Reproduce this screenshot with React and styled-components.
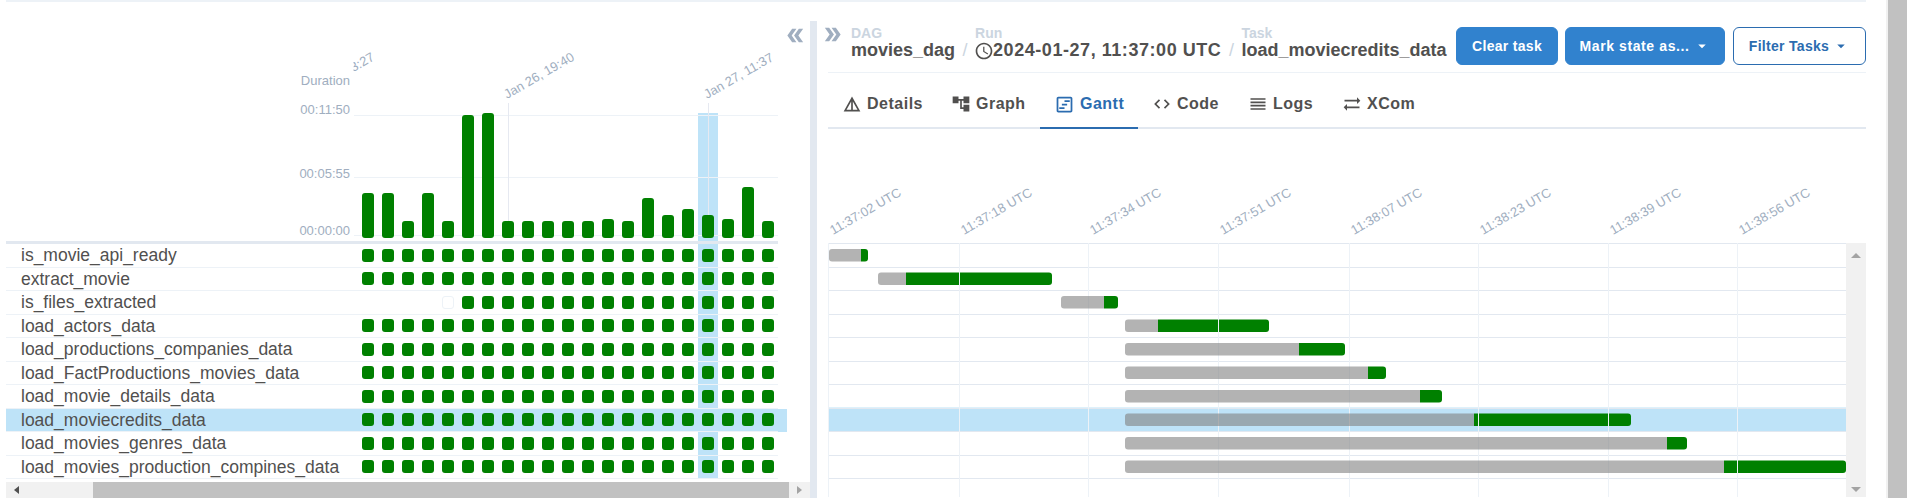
import React from "react";
import styled, { createGlobalStyle } from "styled-components";
import {
  MdDoubleArrow,
  MdAccessTime,
  MdArrowDropDown,
  MdDetails,
  MdAccountTree,
  MdOutlineViewTimeline,
  MdReorder,
  MdSyncAlt,
} from "react-icons/md";
import { BiCode } from "react-icons/bi";

const GREEN = "#008000";
const TEXT = "#51504f";
const AXIS = "#a0aec0";
const LINE = "#edf2f7";
const BORDER = "#e2e8f0";
const SELECTED = "#bee3f8";

const tasks = [
  "is_movie_api_ready",
  "extract_movie",
  "is_files_extracted",
  "load_actors_data",
  "load_productions_companies_data",
  "load_FactProductions_movies_data",
  "load_movie_details_data",
  "load_moviecredits_data",
  "load_movies_genres_data",
  "load_movies_production_compines_data",
];
const SELECTED_TASK = 7;
const SELECTED_RUN = 17;

// top of each duration bar, page y
const barTops = [
  193, 193, 221, 193, 221, 115, 113, 221, 221, 221, 221, 221, 219, 221, 198,
  215, 209, 215, 219, 187, 221,
];

// x where waiting ends, x where running ends
const ganttBars = [
  [829, 861, 868],
  [878, 906, 1052],
  [1061, 1104, 1118],
  [1125, 1158, 1269],
  [1125, 1299, 1345],
  [1125, 1368, 1386],
  [1125, 1420, 1442],
  [1125, 1474, 1631],
  [1125, 1667, 1687],
  [1125, 1724, 1846],
];

const ganttTicks = [
  [828, "11:37:02 UTC"],
  [959, "11:37:18 UTC"],
  [1088, "11:37:34 UTC"],
  [1218, "11:37:51 UTC"],
  [1349, "11:38:07 UTC"],
  [1478, "11:38:23 UTC"],
  [1608, "11:38:39 UTC"],
  [1737, "11:38:56 UTC"],
];

const tabs = [
  ["Details", MdDetails, 20, 109],
  ["Graph", MdAccountTree, 20, 103],
  ["Gantt", MdOutlineViewTimeline, 21, 98],
  ["Code", BiCode, 20, 96],
  ["Logs", MdReorder, 20, 94],
  ["XCom", MdSyncAlt, 20, 103],
];

const GlobalStyle = createGlobalStyle`
  html, body {
    margin: 0;
    height: 498px;
    overflow: hidden;
    background: #fff;
    font-family: "Liberation Sans", Arial, sans-serif;
    color: ${TEXT};
  }
`;

const Page = styled.div`
  display: flex;
  width: 1907px;
  height: 498px;
`;

const Content = styled.div`
  width: 1860px;
  margin-left: 6px;
`;

const TopStrip = styled.div`
  height: 2px;
  background: ${LINE};
`;

const Columns = styled.div`
  display: flex;
  height: 496px;
`;

const PageScrollbar = styled.div`
  width: 19px;
  margin-left: 20px;
  background: #c1c1c1;
  border-left: 2px solid #f1f1f1;
`;

const LeftPanel = styled.section`
  position: relative;
  width: 804px;
  flex: none;
`;

const CollapseButton = styled.span`
  position: absolute;
  top: 22px;
  left: 778px;
  display: flex;
  color: ${AXIS};
  transform: rotate(180deg);
`;

const ChartSvg = styled.svg`
  display: block;
`;

const ChartRule = styled.div`
  width: 772px;
  height: 3px;
  background: ${BORDER};
`;

const Row = styled.div`
  display: flex;
  width: 772px;
  height: 23.5px;
  padding-right: 9px;
  background: ${(p) => (p.$selected ? SELECTED : "transparent")};
`;

const TaskName = styled.div`
  width: 352px;
  flex: none;
  box-sizing: border-box;
  padding-left: 15px;
  font-size: 17.5px;
  line-height: 22.5px;
  white-space: nowrap;
  border-bottom: 1px solid ${LINE};
`;

const RunCell = styled.div`
  width: 20px;
  flex: none;
  box-sizing: border-box;
  display: flex;
  align-items: center;
  justify-content: center;
  background: ${(p) => (p.$selected ? SELECTED : "transparent")};
  border-bottom: 1px solid ${LINE};
`;

const RunSquare = styled.span`
  width: 12px;
  height: 13px;
  box-sizing: border-box;
  border-radius: 3px;
  background: ${(p) => (p.$empty ? "#fff" : GREEN)};
  border: ${(p) => (p.$empty ? `1px solid ${LINE}` : "none")};
`;

const HScrollbar = styled.div`
  display: flex;
  align-items: center;
  height: 16px;
  margin-top: 3px;
  background: #f1f1f1;
`;

const ArrowSlot = styled.div`
  width: ${(p) => p.$width}px;
  flex: none;
  box-sizing: border-box;
  padding-left: 8px;
`;

const ArrowLeft = styled.div`
  width: 0;
  height: 0;
  border-style: solid;
  border-width: 4px 5px 4px 0;
  border-color: transparent #505050 transparent transparent;
`;

const ArrowRight = styled.div`
  width: 0;
  height: 0;
  border-style: solid;
  border-width: 4px 0 4px 5px;
  border-color: transparent transparent transparent #a3a3a3;
`;

const HThumb = styled.div`
  flex: 1;
  height: 16px;
  background: #c1c1c1;
`;

const Divider = styled.div`
  width: 7px;
  flex: none;
  margin-top: 19px;
  background: ${BORDER};
`;

const RightPanel = styled.section`
  width: 1049px;
  flex: none;
  padding-left: 11px;
  box-sizing: border-box;
`;

const Header = styled.header`
  display: flex;
  align-items: flex-end;
  justify-content: space-between;
  height: 71px;
  box-sizing: border-box;
  padding-bottom: 7px;
  border-bottom: 1px solid ${LINE};
`;

const Crumbs = styled.div`
  display: flex;
  align-items: flex-end;
`;

const ExpandButton = styled.span`
  display: flex;
  align-self: flex-start;
  margin: -3px 7px 0 -7px;
  color: ${AXIS};
`;

const Crumb = styled.div`
  display: flex;
  flex-direction: column;
  padding-bottom: 4px;
`;

const CrumbLabel = styled.span`
  font-size: 14px;
  line-height: 14px;
  font-weight: 700;
  color: #cbd5e0;
`;

const CrumbValue = styled.span`
  display: flex;
  align-items: center;
  font-size: 18px;
  line-height: 21px;
  font-weight: 700;
  white-space: nowrap;
  svg {
    margin: 1px -1px 0 -1px;
  }
`;

const RunDate = styled.span`
  letter-spacing: 0.55px;
`;

const Slash = styled.span`
  margin: 0 7.5px;
  padding-bottom: 4px;
  font-size: 18px;
  line-height: 21px;
  color: #cbd5e0;
`;

const Actions = styled.div`
  display: flex;
`;

const ActionButton = styled.button`
  display: flex;
  align-items: center;
  justify-content: center;
  height: 38px;
  width: ${(p) => p.$width}px;
  margin-left: ${(p) => p.$gap}px;
  padding: 0;
  box-sizing: border-box;
  font-family: inherit;
  font-size: 14px;
  font-weight: 700;
  letter-spacing: ${(p) => p.$spacing}px;
  border-radius: 6px;
  color: ${(p) => (p.$outline ? "#2b6cb0" : "#fff")};
  background: ${(p) => (p.$outline ? "#fff" : "#3182ce")};
  border: 1px solid ${(p) => (p.$outline ? "#2b6cb0" : "#3182ce")};
  svg {
    margin-left: 3px;
  }
`;

const TabList = styled.nav`
  display: flex;
  padding-top: 6px;
  border-bottom: 2px solid ${BORDER};
`;

const Tab = styled.div`
  display: flex;
  align-items: center;
  gap: 5px;
  width: ${(p) => p.$width}px;
  height: 50px;
  margin-bottom: -2px;
  box-sizing: border-box;
  padding: 12px 0 10px 14px;
  font-size: 16px;
  line-height: 24px;
  font-weight: 700;
  letter-spacing: 0.5px;
  color: ${(p) => (p.$active ? "#2b6cb0" : TEXT)};
  border-bottom: 2px solid ${(p) => (p.$active ? "#2b6cb0" : "transparent")};
`;

const GanttArea = styled.div`
  display: flex;
`;

const VScrollbar = styled.div`
  display: flex;
  flex-direction: column;
  align-items: center;
  justify-content: space-between;
  width: 20px;
  height: 254px;
  margin-top: 114px;
  padding: 10px 0 5px;
  box-sizing: border-box;
  background: #f1f1f1;
`;

const ArrowUp = styled.div`
  width: 0;
  height: 0;
  border-style: solid;
  border-width: 0 5px 5px 5px;
  border-color: transparent transparent #a3a3a3 transparent;
`;

const ArrowDown = styled.div`
  width: 0;
  height: 0;
  border-style: solid;
  border-width: 5px 5px 0 5px;
  border-color: #a3a3a3 transparent transparent transparent;
`;

const leftRounded = (x0, x1, y, h, r = 3) =>
  `M${x1} ${y}H${x0 + r}Q${x0} ${y} ${x0} ${y + r}V${y + h - r}Q${x0} ${y + h} ${x0 + r} ${y + h}H${x1}Z`;

const rightRounded = (x0, x1, y, h, r = 3) =>
  `M${x0} ${y}H${x1 - r}Q${x1} ${y} ${x1} ${y + r}V${y + h - r}Q${x1} ${y + h} ${x1 - r} ${y + h}H${x0}Z`;

const DurationChart = () => (
  <ChartSvg width="772" height="239" viewBox="6 2 772 239">
    <defs>
      <clipPath id="plot-clip">
        <rect x="353.5" y="2" width="425" height="239" />
      </clipPath>
    </defs>
    <rect x="698" y="113" width="20" height="128" fill={SELECTED} />
    {[115.5, 177.5, 235.5].map((y) => (
      <line key={y} x1="354" x2="778" y1={y} y2={y} stroke={LINE} />
    ))}
    {[508.5, 708.5].map((x) => (
      <line key={x} x1={x} x2={x} y1="103" y2="238" stroke="#e6e9f1" />
    ))}
    {barTops.map((top, i) => (
      <rect
        key={i}
        x={362 + i * 20}
        y={top}
        width="12"
        height={238 - top}
        rx="3"
        fill={GREEN}
      />
    ))}
    <g fill={AXIS} fontSize="13" textAnchor="end">
      <text x="350" y="85">Duration</text>
      <text x="350" y="114">00:11:50</text>
      <text x="350" y="178">00:05:55</text>
      <text x="350" y="235">00:00:00</text>
    </g>
    <g fill={AXIS} fontSize="13" clipPath="url(#plot-clip)">
      <text x="307" y="99" transform="rotate(-30 307 99)">Jan 26, 03:27</text>
      <text x="507" y="99" transform="rotate(-30 507 99)">Jan 26, 19:40</text>
      <text x="707" y="99" transform="rotate(-30 707 99)">Jan 27, 11:37</text>
    </g>
  </ChartSvg>
);

const GanttChart = () => {
  const rowTop = (i) => 244 + i * 23.5;
  return (
    <ChartSvg width="1018" height="368" viewBox="828 130 1018 368">
      <rect
        x="828"
        y={rowTop(SELECTED_TASK)}
        width="1018"
        height="23.5"
        fill={SELECTED}
      />
      {ganttBars.map(([, wait, end], i) => (
        <path
          key={i}
          d={rightRounded(wait, end, rowTop(i) + 6, 12.5)}
          fill={GREEN}
        />
      ))}
      {tasks.concat("").map((_, i) => (
        <line
          key={i}
          x1="828"
          x2="1846"
          y1={Math.round(rowTop(i)) + 0.5}
          y2={Math.round(rowTop(i)) + 0.5}
          stroke={BORDER}
        />
      ))}
      {ganttTicks.map(([x]) => (
        <line
          key={x}
          x1={x + 0.5}
          x2={x + 0.5}
          y1="244"
          y2="498"
          stroke={LINE}
        />
      ))}
      {ganttBars.map(([start, wait], i) => (
        <path
          key={i}
          d={leftRounded(start, wait, rowTop(i) + 6, 12.5)}
          fill="rgba(128,128,128,0.6)"
        />
      ))}
      <g fill={AXIS} fontSize="13">
        {ganttTicks.map(([x, label]) => (
          <text
            key={x}
            x={x + 5}
            y="236"
            transform={`rotate(-30 ${x + 5} 236)`}
          >
            {label}
          </text>
        ))}
      </g>
    </ChartSvg>
  );
};

const App = () => (
  <Page>
    <GlobalStyle />
    <Content>
      <TopStrip />
      <Columns>
        <LeftPanel>
          <CollapseButton>
            <MdDoubleArrow size={23} />
          </CollapseButton>
          <DurationChart />
          <ChartRule />
          {tasks.map((task, t) => (
            <Row key={task} $selected={t === SELECTED_TASK}>
              <TaskName>{task}</TaskName>
              {barTops.map((_, r) => (
                <RunCell key={r} $selected={r === SELECTED_RUN}>
                  {(t !== 2 || r >= 4) && <RunSquare $empty={t === 2 && r === 4} />}
                </RunCell>
              ))}
            </Row>
          ))}
          <HScrollbar>
            <ArrowSlot $width={87}>
              <ArrowLeft />
            </ArrowSlot>
            <HThumb />
            <ArrowSlot $width={21}>
              <ArrowRight />
            </ArrowSlot>
          </HScrollbar>
        </LeftPanel>
        <Divider />
        <RightPanel>
          <Header>
            <Crumbs>
              <ExpandButton>
                <MdDoubleArrow size={23} />
              </ExpandButton>
              <Crumb>
                <CrumbLabel>DAG</CrumbLabel>
                <CrumbValue>movies_dag</CrumbValue>
              </Crumb>
              <Slash>/</Slash>
              <Crumb>
                <CrumbLabel>Run</CrumbLabel>
                <CrumbValue>
                  <MdAccessTime size={20} />
                  <RunDate>2024-01-27, 11:37:00 UTC</RunDate>
                </CrumbValue>
              </Crumb>
              <Slash>/</Slash>
              <Crumb>
                <CrumbLabel>Task</CrumbLabel>
                <CrumbValue>load_moviecredits_data</CrumbValue>
              </Crumb>
            </Crumbs>
            <Actions>
              <ActionButton $width={102} $gap={0} $spacing={0.3}>
                Clear task
              </ActionButton>
              <ActionButton $width={160} $gap={7} $spacing={0.6}>
                Mark state as...
                <MdArrowDropDown size={18} />
              </ActionButton>
              <ActionButton $width={133} $gap={8} $spacing={0.3} $outline>
                Filter Tasks
                <MdArrowDropDown size={18} />
              </ActionButton>
            </Actions>
          </Header>
          <TabList>
            {tabs.map(([label, Icon, size, width]) => (
              <Tab key={label} $active={label === "Gantt"} $width={width}>
                <Icon size={size} />
                {label}
              </Tab>
            ))}
          </TabList>
          <GanttArea>
            <GanttChart />
            <VScrollbar>
              <ArrowUp />
              <ArrowDown />
            </VScrollbar>
          </GanttArea>
        </RightPanel>
      </Columns>
    </Content>
    <PageScrollbar />
  </Page>
);

export default App;
